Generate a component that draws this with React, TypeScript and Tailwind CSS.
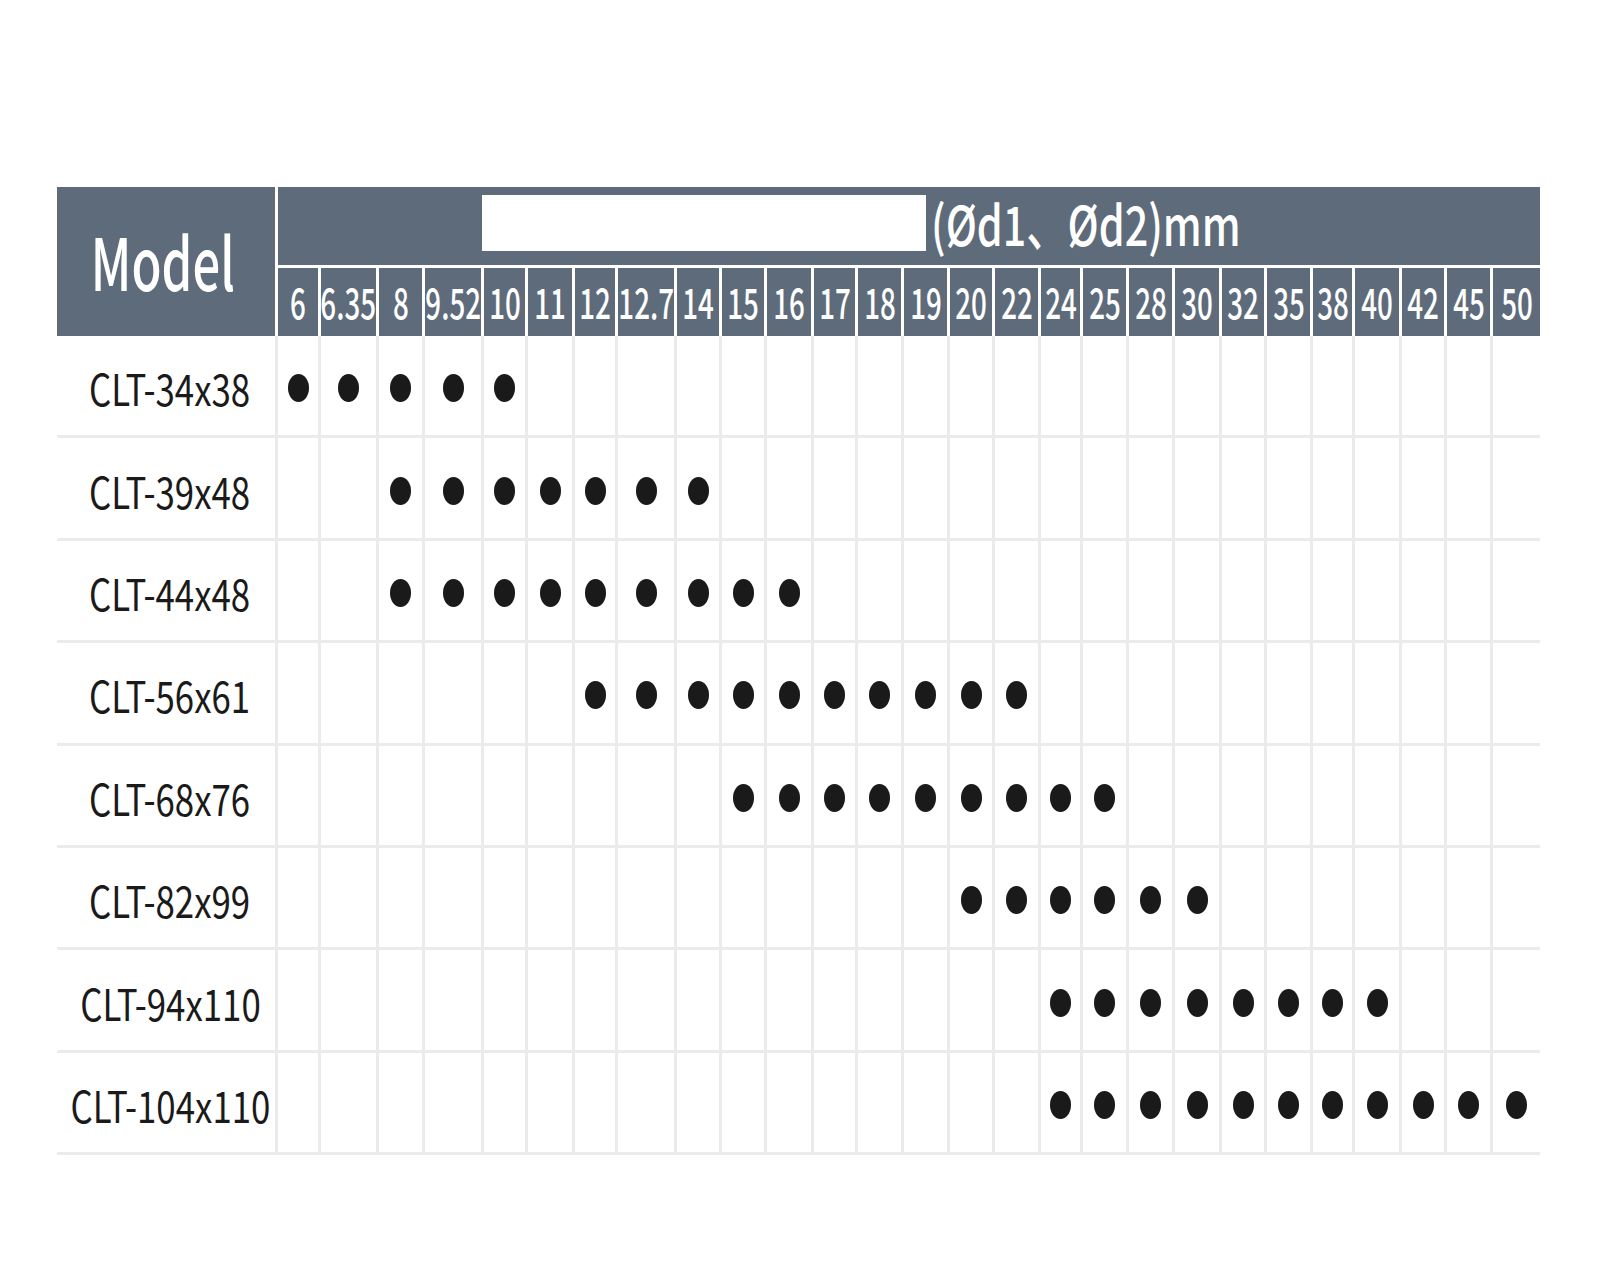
import React from "react";

const cols: { l: string; w: string }[] = [
  { l: "6", w: "w-[40px]" },
  { l: "6.35", w: "w-[55px]" },
  { l: "8", w: "w-[43px]" },
  { l: "9.52", w: "w-[56px]" },
  { l: "10", w: "w-[41px]" },
  { l: "11", w: "w-[44px]" },
  { l: "12", w: "w-[40px]" },
  { l: "12.7", w: "w-[56px]" },
  { l: "14", w: "w-[42px]" },
  { l: "15", w: "w-[42px]" },
  { l: "16", w: "w-[44px]" },
  { l: "17", w: "w-[41px]" },
  { l: "18", w: "w-[43px]" },
  { l: "19", w: "w-[43px]" },
  { l: "20", w: "w-[42px]" },
  { l: "22", w: "w-[43px]" },
  { l: "24", w: "w-[39px]" },
  { l: "25", w: "w-[43px]" },
  { l: "28", w: "w-[43px]" },
  { l: "30", w: "w-[44px]" },
  { l: "32", w: "w-[42px]" },
  { l: "35", w: "w-[43px]" },
  { l: "38", w: "w-[39px]" },
  { l: "40", w: "w-[44px]" },
  { l: "42", w: "w-[42px]" },
  { l: "45", w: "w-[43px]" },
  { l: "50", w: "w-[47px]" },
];

const rows: { m: string; from: number; to: number }[] = [
  { m: "CLT-34x38", from: 0, to: 4 },
  { m: "CLT-39x48", from: 2, to: 8 },
  { m: "CLT-44x48", from: 2, to: 10 },
  { m: "CLT-56x61", from: 6, to: 15 },
  { m: "CLT-68x76", from: 9, to: 17 },
  { m: "CLT-82x99", from: 14, to: 19 },
  { m: "CLT-94x110", from: 16, to: 23 },
  { m: "CLT-104x110", from: 16, to: 26 },
];

const font = "font-['Noto_Sans_CJK_SC','Noto_Sans',sans-serif]";

export default function App() {
  return (
    <div className={`w-full h-[1271px] bg-white pt-[187px] pl-[57px] ${font}`}>
      <div className="w-[1483px]">
        {/* header */}
        <div className="flex h-[149px] bg-white gap-[3px]">
          <div className="w-[218px] bg-[#5e6b7a] flex items-center justify-center">
            <span className="inline-block scale-x-[0.68] text-[72px] leading-none text-white font-medium mt-[-4px] ml-[-6px]">
              Model
            </span>
          </div>
          <div className="flex-1 flex flex-col gap-[3px]">
            <div className="h-[78px] bg-[#5e6b7a] flex items-center pl-[204px]">
              <div className="w-[444px] h-[56px] bg-white mt-[-6px]" />
              <span className="inline-block origin-left scale-x-[0.75] text-[55px] leading-none text-white font-medium ml-[5px] mt-[-8px] whitespace-nowrap">
                (Ød1、Ød2)mm
              </span>
            </div>
            <div className="h-[68px] flex gap-[3px]">
              {cols.map((c) => (
                <div
                  key={c.l}
                  className={`${c.w} shrink-0 bg-[#5e6b7a] flex items-center justify-center overflow-visible`}
                >
                  <span className="inline-block scale-x-[0.66] text-[42px] leading-none text-white font-medium whitespace-nowrap mt-[-2px]">
                    {c.l}
                  </span>
                </div>
              ))}
            </div>
          </div>
        </div>
        {/* body */}
        {rows.map((r) => (
          <div key={r.m} className="flex gap-[3px] bg-[#ebebeb] pb-[3px] h-[102.4px]">
            <div className="w-[218px] bg-white flex items-center justify-center pl-[8px]">
              <span className="inline-block scale-x-[0.81] text-[43px] leading-none text-[#1a1a1a] mt-[4px] whitespace-nowrap">
                {r.m}
              </span>
            </div>
            {cols.map((c, i) => (
              <div key={c.l} className={`${c.w} shrink-0 bg-white flex items-center justify-center`}>
                {i >= r.from && i <= r.to ? (
                  <div className="w-[21px] h-[28px] rounded-[50%] bg-[#1a1a1a] mt-[5px]" />
                ) : null}
              </div>
            ))}
          </div>
        ))}
      </div>
    </div>
  );
}
